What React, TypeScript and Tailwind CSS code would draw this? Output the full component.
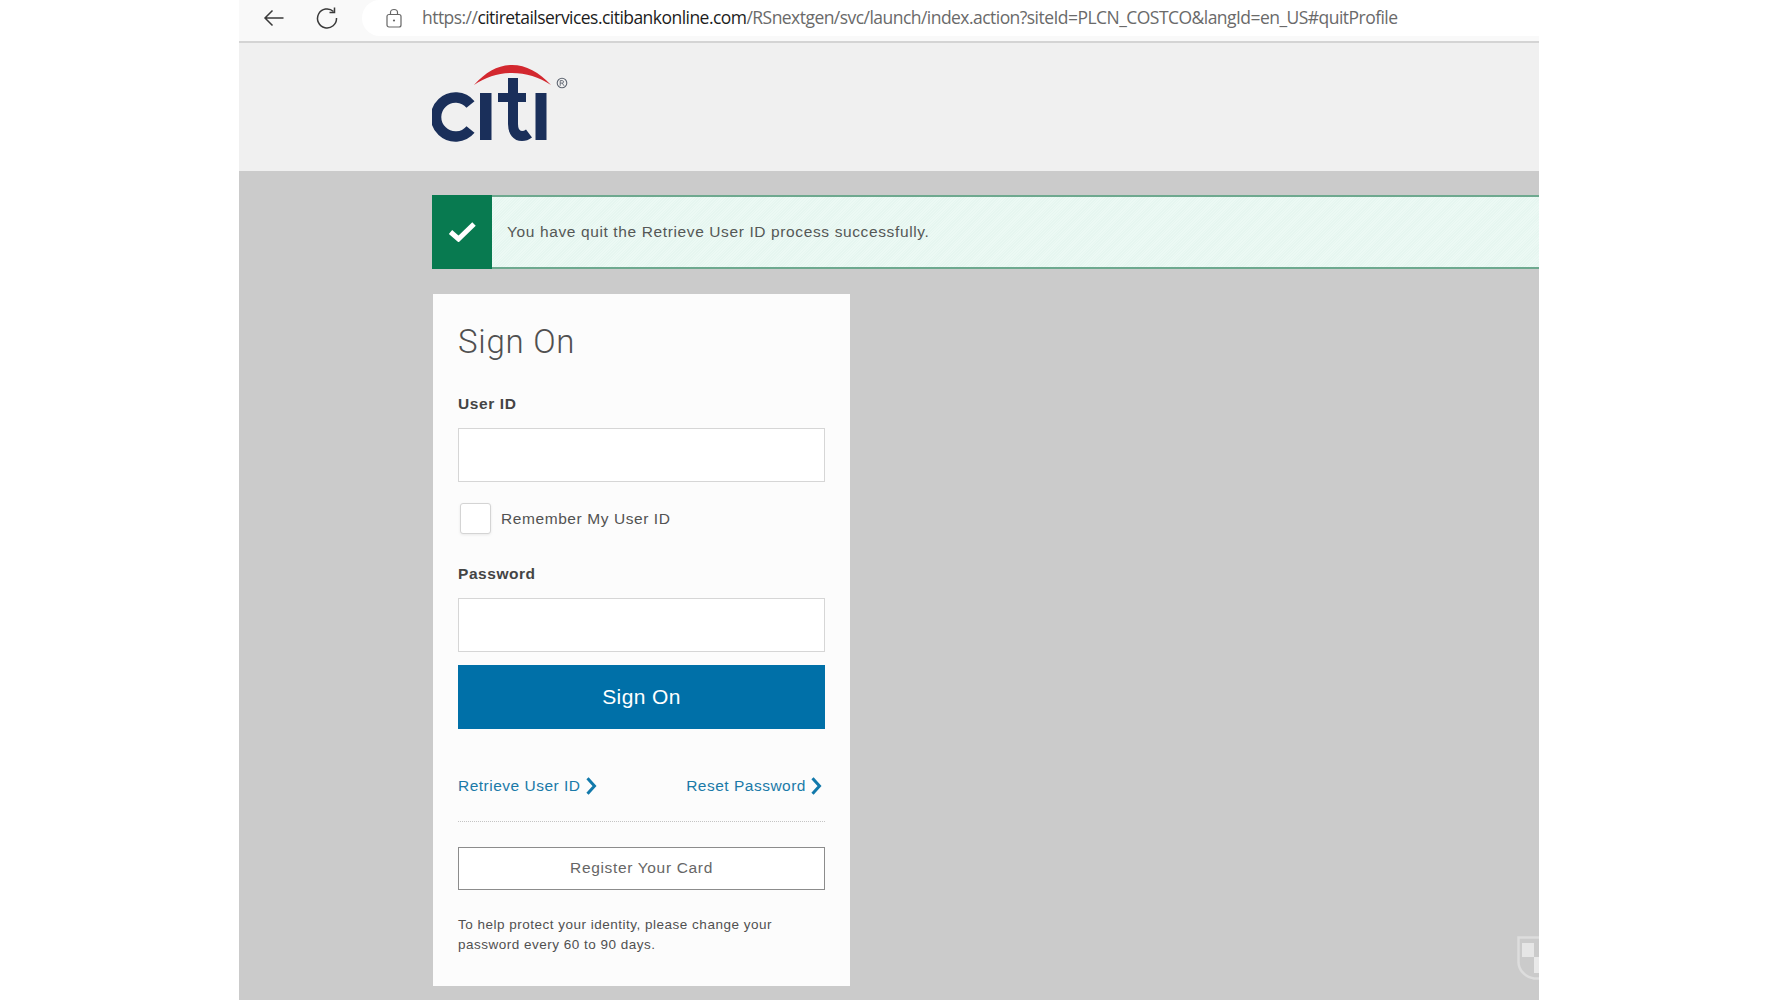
import React from "react";

const sans = "font-['Liberation_Sans',Arial,sans-serif]";

function CitiLogo() {
  return (
    <svg width="138" height="80" viewBox="0 0 138 80" fill="none" aria-label="citi logo">
      <path d="M38.5 40.5 A 19.5 19.5 0 1 0 38.5 65.5" stroke="#1a2f5a" strokeWidth="10.5" />
      <rect x="48" y="29" width="11.5" height="47" fill="#1a2f5a" />
      <path d="M81 14 V 60 C 81 68 85 72 90 72 C 92.5 72 95 71 97 69.5" stroke="#1a2f5a" strokeWidth="10" />
      <rect x="66" y="29" width="28" height="9" fill="#1a2f5a" />
      <rect x="103.5" y="29" width="11" height="47" fill="#1a2f5a" />
      <path d="M42 21 C 54 8 66 1 80 1 C 94 1 107 8 119 21 C 107 13 94 9 80 9 C 66 9 54 13 42 21 Z" fill="#d3282f" />
      <circle cx="130" cy="19" r="4.8" stroke="#5d6470" strokeWidth="1.1" />
      <path d="M128.2 21.8 V 16.6 H 130.3 C 132 16.6 132 19.1 130.3 19.1 H 128.2 M 130.3 19.1 L 132 21.8" stroke="#5d6470" strokeWidth="0.9" />
    </svg>
  );
}

function Chevron() {
  return (
    <svg width="11" height="18" viewBox="0 0 11 18" fill="none" className="shrink-0">
      <path d="M1.5 1.2 L8.5 9 L1.5 16.8" stroke="#1279ab" strokeWidth="3" />
    </svg>
  );
}

function Shield() {
  return (
    <svg width="22" height="44" viewBox="0 0 22 44" fill="none" className="block">
      <path d="M22 1.5 H 1.5 V 26 C 1.5 34 8 41 17 42.5 H 22" stroke="#dddddd" strokeWidth="2.5" />
      <rect x="5" y="7" width="12" height="14" fill="#e6e6e6" />
      <rect x="17" y="21" width="5" height="16" fill="#e9e9e9" />
    </svg>
  );
}

export default function App() {
  return (
    <div className="flex h-[1000px] w-full overflow-hidden bg-white pl-[239px] pr-[239px]">
      <div className="flex h-full w-[1300px] flex-col">
        <div className="flex h-[43px] shrink-0 items-center border-b-2 border-[#d4d4d4] bg-[#f9f9f9] pb-[5px]">
          <svg width="21" height="18" viewBox="0 0 21 18" fill="none" className="ml-[24px] shrink-0">
            <path d="M20.5 9 H 2 M 9.5 1.5 L 2 9 L 9.5 16.5" stroke="#3a3a3a" strokeWidth="1.5" />
          </svg>
          <svg width="22" height="22" viewBox="0 0 22 22" fill="none" className="ml-[32px] shrink-0">
            <path d="M17.5 4.5 A 9.5 9.5 0 1 0 20.5 11" stroke="#3a3a3a" strokeWidth="1.5" />
            <path d="M18.5 0.5 V 5.5 H 13.5" stroke="#3a3a3a" strokeWidth="1.5" />
          </svg>
          <div className="ml-[24px] flex h-[36px] flex-1 items-center self-start rounded-l-[18px] bg-white pl-[24px]">
            <svg width="16" height="20" viewBox="0 0 16 20" fill="none" className="shrink-0">
              <rect x="1" y="6.5" width="14" height="12.5" rx="2" stroke="#666" strokeWidth="1.2" />
              <path d="M4.5 6.5 V 4.5 C 4.5 0.5 11.5 0.5 11.5 4.5 V 6.5" stroke="#666" strokeWidth="1.2" />
              <circle cx="8" cy="12.5" r="1.1" fill="#666" />
            </svg>
            <div className="mb-[1px] ml-[20px] whitespace-nowrap font-['Open_Sans',sans-serif] text-[17.5px] tracking-[-0.54px] text-[#6a6a6a]">
              https://<span className="text-[#1c1c1c]">citiretailservices.citibankonline.com</span>/RSnextgen/svc/launch/index.action?siteId=PLCN_COSTCO&amp;langId=en_US#quitProfile
            </div>
          </div>
        </div>

        <div className="flex h-[128px] shrink-0 items-start bg-[#f0f0f0] pl-[193px] pt-[21px]">
          <CitiLogo />
        </div>

        <div className={`relative flex flex-1 flex-col items-start overflow-hidden bg-[#cbcbcb] pl-[193px] pt-[24px] ${sans}`}>
          <div className="flex h-[74px] w-[1107px] shrink-0 items-stretch border-y-2 border-[#6ea98f] bg-[#e9f7f2] bg-[repeating-linear-gradient(135deg,#e6f6f0_0px,#e6f6f0_1px,#ecf9f4_1px,#ecf9f4_2px)]">
            <div className="-my-[2px] flex w-[60px] shrink-0 items-center justify-center bg-[#087a50] pb-[2px]">
              <svg width="28" height="21" viewBox="0 0 28 21" fill="none">
                <path d="M2.5 11 L10.5 18 L26 3" stroke="#ffffff" strokeWidth="5" />
              </svg>
            </div>
            <div className="ml-[15px] flex items-center text-[15.5px] tracking-[0.62px] text-[#555856]">
              You have quit the Retrieve User ID process successfully.
            </div>
          </div>

          <div className="ml-[1px] mt-[25px] flex h-[692px] w-[417px] shrink-0 flex-col bg-[#fcfcfc] px-[25px]">
            <h1 className="mt-[28px] font-['Roboto',sans-serif] text-[33px] font-light leading-[40px] tracking-[0.75px] text-[#505050]">
              Sign On
            </h1>
            <label className="mt-[32px] text-[15.5px] font-bold leading-[20px] tracking-[0.6px] text-[#444444]">User ID</label>
            <div className="mt-[14px] h-[54px] w-[367px] shrink-0 border border-[#d6d6d6] bg-white" />
            <div className="mt-[21px] flex h-[31px] items-center pl-[2px]">
              <div className="h-[31px] w-[31px] shrink-0 rounded-[3px] border border-[#d4d4d4] bg-white shadow-[0_1px_3px_rgba(0,0,0,0.08)]" />
              <span className="ml-[10px] mt-[1px] text-[15.5px] tracking-[0.58px] text-[#525252]">Remember My User ID</span>
            </div>
            <label className="mt-[30px] text-[15.5px] font-bold leading-[20px] tracking-[0.55px] text-[#444444]">Password</label>
            <div className="mt-[14px] h-[54px] w-[367px] shrink-0 border border-[#d6d6d6] bg-white" />
            <button className="mt-[13px] flex h-[64px] w-[367px] shrink-0 items-center justify-center bg-[#0070a8] pb-[1px] text-[21px] tracking-[0.4px] text-white">
              Sign On
            </button>
            <div className="mt-[48px] flex h-[18px] w-[367px] items-center justify-between pr-[3px] text-[15.5px] tracking-[0.5px] text-[#1a7aa8]">
              <span className="flex items-center gap-[5px]">Retrieve User ID <Chevron /></span>
              <span className="flex items-center gap-[5px]">Reset Password <Chevron /></span>
            </div>
            <div className="mt-[26px] w-[367px] border-t border-dotted border-[#c4c4c4]" />
            <button className="mt-[25px] flex h-[43px] w-[367px] shrink-0 items-center justify-center border border-[#8c8c8c] bg-white pb-[2px] text-[15.5px] tracking-[0.66px] text-[#666666]">
              Register Your Card
            </button>
            <p className="mt-[25px] text-[13.5px] leading-[20px] tracking-[0.5px] text-[#505050]">
              To help protect your identity, please change your
              <br />
              password every 60 to 90 days.
            </p>
          </div>

          <div className="absolute bottom-[20px] right-0">
            <Shield />
          </div>
        </div>
      </div>
    </div>
  );
}
